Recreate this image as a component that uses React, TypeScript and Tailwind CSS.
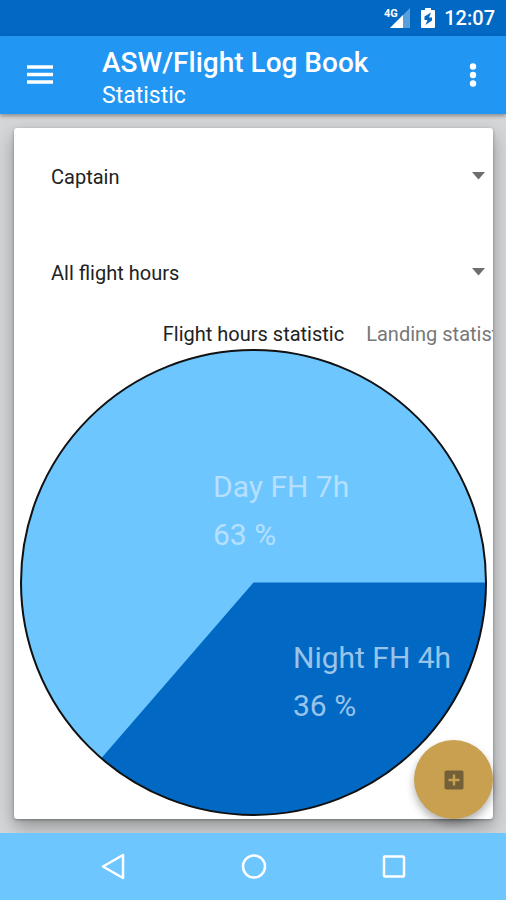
import React from "react";

type Slice = { label: string; percent: string; x: number; y: number; color: string };

const slices: Slice[] = [
  { label: "Day FH 7h", percent: "63 %", x: 193, y: 148, color: "fill-[#b5e0ff]" },
  { label: "Night FH 4h", percent: "36 %", x: 273, y: 319, color: "fill-[#99c4ea]" },
];

function StatusBar() {
  return (
    <div className="flex h-9 items-center justify-end bg-[#0169c3] pr-[11px] text-white">
      <svg className="h-6 w-7" viewBox="0 0 28 24" aria-label="4G signal" role="img">
        <path d="M27 2v20H7z" fill="#5b9fda" />
        <path d="M20 9v13H7z" fill="#fff" />
        <text x="1" y="11" className="fill-white text-[11px] font-bold">4G</text>
      </svg>
      <svg className="ml-[9px] h-6 w-4" viewBox="0 0 16 24" aria-label="Battery charging" role="img">
        <path d="M5 2h6v2h3q1 0 1 1v16q0 1-1 1H2q-1 0-1-1V5q0-1 1-1h3z" fill="#fff" />
        <path d="M11 6.500 4.500 10.500v3.500h3L5.500 19l6.500-4.500v-3H9z" fill="#0169c3" />
      </svg>
      <time className="ml-2 text-[20px] leading-6 font-medium">12:07</time>
    </div>
  );
}

function AppBar() {
  return (
    <header className="relative z-10 flex h-[78px] items-center bg-[#2196f3] text-white shadow-[0_2px_4px_rgba(0,0,0,0.35)]">
      <button aria-label="Open menu" className="flex h-12 w-20 items-center justify-center">
        <svg className="h-7 w-7" viewBox="0 0 28 28" stroke="currentColor" strokeWidth="3.500">
          <path d="M1 6h26M1 13.500h26M1 21h26" />
        </svg>
      </button>
      <div className="min-w-0 flex-1 pt-[6px] pl-[22px]">
        <h1 className="truncate text-[28px] leading-9 font-medium">ASW/Flight Log Book</h1>
        <p className="text-[23px] leading-[30px]">Statistic</p>
      </div>
      <button aria-label="More options" className="flex h-12 w-[66px] items-center justify-center">
        <svg className="h-7 w-7" viewBox="0 0 28 28" fill="currentColor">
          <circle cx="14" cy="5.500" r="3.200" />
          <circle cx="14" cy="14" r="3.200" />
          <circle cx="14" cy="22.500" r="3.200" />
        </svg>
      </button>
    </header>
  );
}

function Spinner({ label, options }: { label: string; options: string[] }) {
  return (
    <div className="relative flex h-24 items-center">
      <select
        aria-label={label}
        className="h-[50px] w-full appearance-none bg-transparent pt-[2px] pr-10 pl-[37px] text-[20px] text-[#222] outline-none"
      >
        {options.map((option) => (
          <option key={option}>{option}</option>
        ))}
      </select>
      <svg className="pointer-events-none absolute right-2 h-2 w-[13px]" viewBox="0 0 13 8" fill="#6e6e6e">
        <path d="M0 0h13L6.500 7.500z" />
      </svg>
    </div>
  );
}

function PieChart() {
  return (
    <svg className="block w-full" viewBox="0 0 467 467" role="img" aria-label="Flight hours by day and night">
      <circle cx="233.500" cy="233.500" r="232.500" fill="#6ec6ff" />
      <path d="M233.500 233.500H466A232.500 232.500 0 0 1 81.300 409.200Z" fill="#0169c3" />
      <circle cx="233.500" cy="233.500" r="232.500" fill="none" stroke="#111" strokeWidth="2" />
      {slices.map((slice) => (
        <text key={slice.label} className={`text-[30px] ${slice.color}`}>
          <tspan x={slice.x} y={slice.y}>{slice.label}</tspan>
          <tspan x={slice.x} y={slice.y + 48}>{slice.percent}</tspan>
        </text>
      ))}
    </svg>
  );
}

function NavigationBar() {
  return (
    <nav className="relative z-10 flex h-[67px] items-center justify-center gap-28 bg-[#6ec6ff] pl-[2px] text-white">
      <button aria-label="Back">
        <svg className="h-7 w-7" viewBox="0 0 28 28" fill="none" stroke="currentColor" strokeWidth="2.500" strokeLinejoin="round">
          <path d="M23 2v23L3 13.500z" />
        </svg>
      </button>
      <button aria-label="Home">
        <svg className="h-7 w-7" viewBox="0 0 28 28" fill="none" stroke="currentColor" strokeWidth="2.500">
          <circle cx="14" cy="13.500" r="11" />
        </svg>
      </button>
      <button aria-label="Recent apps">
        <svg className="h-7 w-7" viewBox="0 0 28 28" fill="none" stroke="currentColor" strokeWidth="2.500">
          <rect x="4" y="3.500" width="20" height="20" rx="1" />
        </svg>
      </button>
    </nav>
  );
}

export default function App() {
  return (
    <div className="flex min-h-screen flex-col bg-[#d4d6d8] font-['Roboto',sans-serif]">
      <StatusBar />
      <AppBar />
      <main className="flex flex-1 flex-col overflow-hidden py-[14px] pr-[13px] pl-[14px]">
        <section className="relative flex-1 rounded-[3px] bg-white pb-[3px] shadow-[0_8px_18px_rgba(0,0,0,0.32),0_1px_3px_rgba(0,0,0,0.3)]">
          <Spinner label="Role" options={["Captain", "Co-pilot"]} />
          <Spinner label="Period" options={["All flight hours", "This year"]} />
          <div role="tablist" className="grid grid-cols-[1fr_auto_1fr] text-[20px] leading-[29px] whitespace-nowrap">
            <button role="tab" aria-selected="true" className="col-start-2 text-[#222]">
              Flight hours statistic
            </button>
            <div className="min-w-0 overflow-hidden pl-[22px]">
              <button role="tab" aria-selected="false" className="text-[#777]">
                Landing statistic
              </button>
            </div>
          </div>
          <div className="px-[6px]">
            <PieChart />
          </div>
          <button
            aria-label="Add flight"
            className="absolute right-0 bottom-0 flex h-[79px] w-[79px] items-center justify-center rounded-full bg-[#c8a04f] shadow-[0_5px_9px_rgba(0,0,0,0.3)]"
          >
            <svg className="h-5 w-5" viewBox="0 0 20 20">
              <rect x="0.500" y="0.500" width="19" height="19" rx="2" fill="#736039" />
              <path d="M10 4.500v11M4.500 10h11" stroke="#c8a04f" strokeWidth="2.400" />
            </svg>
          </button>
        </section>
      </main>
      <NavigationBar />
    </div>
  );
}
